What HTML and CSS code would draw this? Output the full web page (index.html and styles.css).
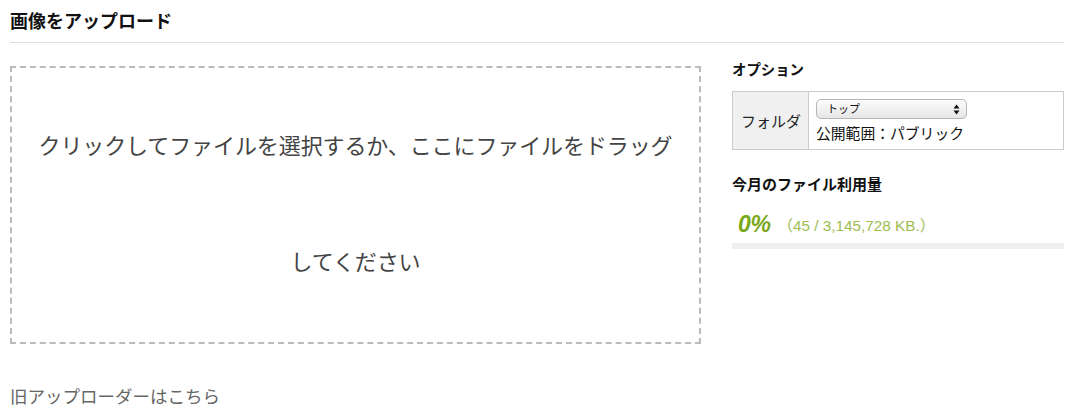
FILE: index.html
```html
<!DOCTYPE html>
<html lang="ja">
<head>
  <meta charset="UTF-8" />
  <title>画像をアップロード</title>
  <link rel="stylesheet" href="styles.css">
</head>
<body>
  <h2 class="page-title">画像をアップロード</h2>

  <div class="upload-row">
    <div class="dropzone">
      クリックしてファイルを選択するか、ここにファイルをドラッグ<br>してください
    </div>

    <div class="side">
      <h3 class="side-title">オプション</h3>
      <table class="options">
        <tr>
          <th>フォルダ</th>
          <td>
            <span class="select-wrap">
              <select class="folder-select">
                <option>トップ</option>
              </select>
              <svg class="select-arrows" width="7" height="11" viewBox="0 0 7 11">
                <path d="M3.5 0.5 L6.5 4.5 L0.5 4.5 Z" fill="#111"/>
                <path d="M0.5 6.5 L6.5 6.5 L3.5 10.5 Z" fill="#111"/>
              </svg>
            </span>
            <div class="scope">公開範囲：パブリック</div>
          </td>
        </tr>
      </table>

      <h3 class="side-title usage-title">今月のファイル利用量</h3>
      <div class="usage">
        <span class="usage-percent">0%</span>
        <span class="usage-detail">（45 / 3,145,728 KB.）</span>
      </div>
      <div class="usage-bar"><div class="usage-fill" style="width: 0%"></div></div>
    </div>
  </div>

  <p class="old-link">旧アップローダーはこちら</p>
</body>
</html>
```

FILE: styles.css
```css
body {
  margin: 0;
  padding: 0 9px 0 10px;
  font-family: "Liberation Sans", "Noto Sans CJK JP", sans-serif;
  color: #222;
  background: #fff;
}
.page-title {
  margin: 12px 0 0;
  padding-bottom: 10px;
  font-size: 18px;
  line-height: 20px;
  font-weight: bold;
  color: #111;
  border-bottom: 1px solid #ddd;
}
.upload-row {
  display: flex;
  align-items: flex-start;
  gap: 31px;
}
.dropzone {
  margin-top: 23px;
  width: 687px;
  height: 274px;
  box-sizing: content-box;
  border: 2px dashed #bbb;
  display: flex;
  align-items: center;
  justify-content: center;
  text-align: center;
  font-size: 22px;
  letter-spacing: -0.1px;
  line-height: 116px;
  color: #444;
  cursor: pointer;
}
.side {
  flex: 1;
  padding-top: 17px;
}
.side-title {
  margin: 0;
  font-size: 14.4px;
  line-height: 20px;
  font-weight: bold;
  color: #111;
}
.options {
  margin-top: 11px;
  width: 100%;
  border-collapse: collapse;
  border: 1px solid #ccc;
}
.options th {
  width: 60px;
  padding: 0 7px 0 8px;
  background: #f0f0f0;
  border-right: 1px solid #ccc;
  font-weight: normal;
  font-size: 15px;
  color: #222;
  text-align: left;
}
.options td {
  padding: 7px 8px 5px 7px;
}
.select-wrap {
  position: relative;
  display: block;
  width: 151px;
  margin-bottom: 5px;
}
.folder-select {
  appearance: none;
  -webkit-appearance: none;
  display: block;
  width: 151px;
  height: 20px;
  padding: 0 0 0 10px;
  border: 1px solid #b5b5b5;
  border-radius: 5px;
  background: linear-gradient(#fcfcfc, #e6e6e6);
  box-shadow: inset 0 1px 0 #fff;
  font-family: "Liberation Sans", "Noto Sans CJK JP", sans-serif;
  font-size: 11px;
  color: #111;
}
.select-arrows {
  position: absolute;
  right: 7px;
  top: 5px;
  pointer-events: none;
}
.scope {
  font-size: 14.8px;
  line-height: 20px;
  color: #111;
}
.usage-title {
  margin-top: 25px;
  font-size: 15px;
}
.usage {
  margin-top: 17px;
  padding-left: 6px;
  display: flex;
  align-items: center;
  height: 24px;
}
.usage-percent {
  font-size: 23px;
  font-weight: bold;
  font-style: italic;
  color: #78a818;
  letter-spacing: -0.3px;
}
.usage-detail {
  margin-left: 7px;
  font-size: 15.3px;
  color: #9dbd4f;
}
.usage-bar {
  margin-top: 7px;
  height: 6px;
  background: #f0f0f0;
}
.usage-fill {
  height: 100%;
  background: #78a818;
}
.old-link {
  margin: 41px 0 0;
  font-size: 17.5px;
  line-height: 24px;
  color: #666;
}
```
